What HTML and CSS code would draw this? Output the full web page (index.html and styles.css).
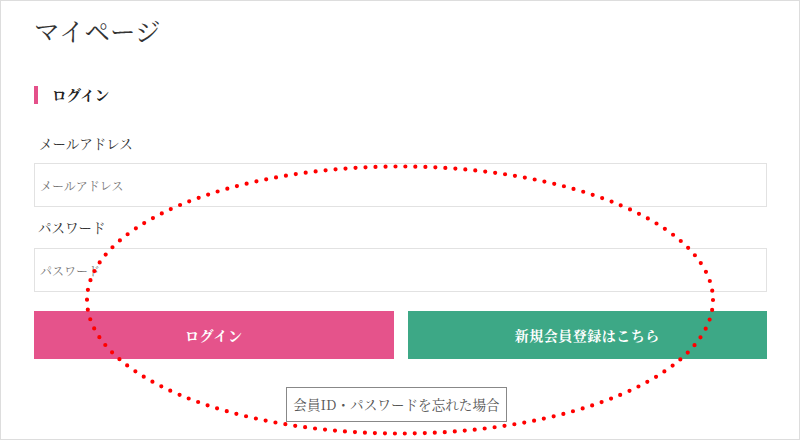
FILE: index.html
```html
<!DOCTYPE html>
<html lang="ja">
<head>
<meta charset="utf-8">
<title>マイページ</title>
<link rel="stylesheet" href="styles.css">
</head>
<body>
<div class="page">
  <h1 class="title">マイページ</h1>
  <h2 class="section-head">ログイン</h2>
  <form class="login-form">
    <label class="field-label" for="email">メールアドレス</label>
    <input class="field-input" id="email" type="text" placeholder="メールアドレス">
    <label class="field-label field-label-pw" for="pw">パスワード</label>
    <input class="field-input field-input-pw" id="pw" type="password" placeholder="パスワード">
    <div class="actions">
      <button type="button" class="btn btn-login">ログイン</button>
      <button type="button" class="btn btn-register">新規会員登録はこちら</button>
    </div>
    <div class="forgot-row">
      <a class="forgot" href="#">会員ID・パスワードを忘れた場合</a>
    </div>
  </form>
  <svg class="annotation" width="800" height="440" viewBox="0 0 800 440" aria-hidden="true">
    <ellipse cx="400" cy="300" rx="313" ry="133.5" fill="none" stroke="#ff0000" stroke-width="4.2" stroke-linecap="round" stroke-dasharray="0 10"/>
  </svg>
</div>
</body>
</html>
```

FILE: styles.css
```css
* {
  box-sizing: border-box;
}

html, body {
  margin: 0;
  padding: 0;
  background: #ffffff;
}

body {
  font-family: "Noto Serif CJK JP", "Liberation Serif", "Noto Sans CJK JP", serif;
  color: #333333;
}

.page {
  position: relative;
  width: 800px;
  height: 440px;
  border: 1px solid #dddddd;
  padding: 11px 32px 0 33px;
  overflow: hidden;
}

.title {
  margin: 0;
  font-size: 25.5px;
  line-height: 36px;
  font-weight: normal;
  color: #333333;
}

.section-head {
  margin: 38px 0 0 0;
  font-size: 14.5px;
  line-height: 18px;
  font-weight: bold;
  color: #222222;
  border-left: 4px solid #e4508a;
  padding-left: 14px;
}

.login-form {
  display: flex;
  flex-direction: column;
  margin: 0;
}

.field-label {
  display: block;
  margin-top: 29px;
  padding-left: 5px;
  font-size: 13.5px;
  line-height: 20px;
  color: #333333;
}

.field-label-pw {
  margin-top: 10px;
  padding-left: 4px;
}

.field-input {
  display: block;
  width: 100%;
  height: 44px;
  margin: 10px 0 0 0;
  border: 1px solid #e2e2e2;
  padding: 0 0 0 5px;
  font-family: inherit;
  font-size: 12px;
  color: #333333;
  background: #ffffff;
  outline: none;
}

.field-input-pw {
  margin-top: 11px;
}

.field-input::placeholder {
  color: #777777;
  opacity: 1;
}

.actions {
  display: grid;
  grid-template-columns: 1fr 1fr;
  gap: 14px;
  margin-top: 19px;
}

.btn {
  height: 48px;
  border: none;
  font-family: inherit;
  font-size: 14px;
  font-weight: bold;
  color: #ffffff;
  letter-spacing: 0.5px;
  cursor: pointer;
}

.btn-login {
  background: #e5538b;
}

.btn-register {
  background: #3da886;
}

.forgot-row {
  display: flex;
  justify-content: center;
  margin-top: 28px;
  padding-right: 8px;
}

.forgot {
  display: inline-block;
  height: 35px;
  line-height: 33px;
  padding: 0 6px;
  border: 1px solid #888888;
  font-size: 13.6px;
  color: #555555;
  text-decoration: none;
}

.annotation {
  position: absolute;
  left: -1px;
  top: -1px;
  pointer-events: none;
}
```
